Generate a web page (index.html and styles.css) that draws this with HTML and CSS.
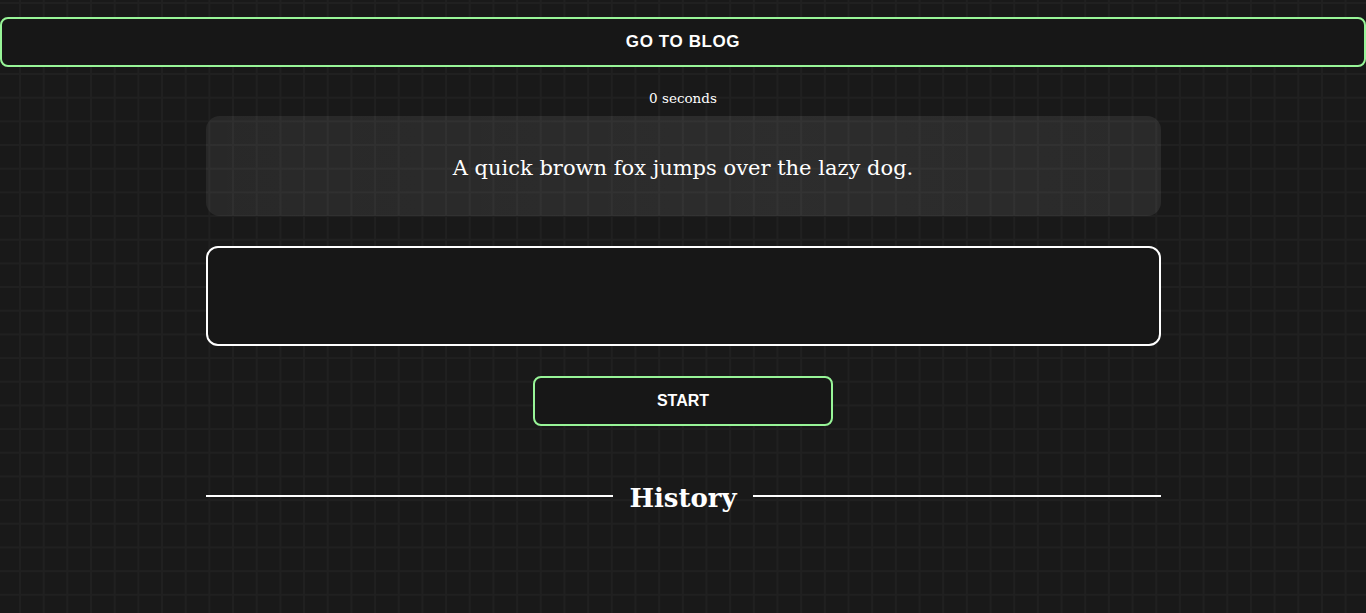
FILE: index.html
```html
<!DOCTYPE html>
<html lang="en">
<head>
<meta charset="utf-8">
<title>Typing Test</title>
<link rel="stylesheet" href="styles.css">
</head>
<body>
<div class="page">
  <a class="btn btn-wide" href="#">GO TO BLOG</a>
  <main class="main">
    <div class="timer">0 seconds</div>
    <div class="prompt">A quick brown fox jumps over the lazy dog.</div>
    <textarea class="input" aria-label="Type here"></textarea>
    <button class="btn btn-start" type="button">START</button>
    <div class="history">
      <span class="rule"></span>
      <h2 class="history-title">History</h2>
      <span class="rule"></span>
    </div>
  </main>
</div>
</body>
</html>
```
FILE: styles.css
```css
html, body {
  margin: 0;
  padding: 0;
  height: 100%;
}
body {
  background-color: #191919;
  background-image:
    linear-gradient(to right, #202020 2px, transparent 2px),
    linear-gradient(to bottom, #202020 2px, transparent 2px);
  background-size: 23.68px 23.68px;
  background-position: 19px 2px;
  color: #fff;
  font-family: "DejaVu Serif", serif;
  overflow: hidden;
}
.page {
  padding-top: 17px;
  display: flex;
  flex-direction: column;
}
.btn {
  box-sizing: border-box;
  display: flex;
  align-items: center;
  justify-content: center;
  height: 50px;
  background: #171717;
  border: 2px solid #98f598;
  border-radius: 8px;
  color: #fff;
  font-family: "Liberation Sans", Arial, sans-serif;
  font-weight: 700;
  font-size: 16px;
  text-decoration: none;
  cursor: pointer;
}
.btn-wide {
  width: 100%;
  font-size: 17px;
  letter-spacing: 0.6px;
}
.main {
  width: 955px;
  margin: 0 auto;
  display: flex;
  flex-direction: column;
  align-items: center;
}
.timer {
  margin-top: 23px;
  height: 16px;
  line-height: 16px;
  font-size: 13.5px;
}
.prompt {
  box-sizing: border-box;
  margin-top: 10px;
  width: 100%;
  height: 100px;
  border-radius: 14px;
  background: linear-gradient(to right, rgba(255,255,255,0.065), rgba(255,255,255,0.085) 60%, rgba(255,255,255,0.075));
  display: flex;
  align-items: center;
  justify-content: center;
  font-size: 21px;
  padding-top: 3px;
}
.input {
  box-sizing: border-box;
  margin-top: 30px;
  width: 100%;
  height: 100px;
  background: #171717;
  border: 2px solid #fff;
  border-radius: 12px;
  resize: none;
  outline: none;
  color: #fff;
  font-family: "DejaVu Serif", serif;
  font-size: 20px;
  padding: 12px;
  display: block;
}
.btn-start {
  margin-top: 30px;
  width: 300px;
}
.history {
  margin-top: 54px;
  width: 100%;
  display: flex;
  align-items: center;
  gap: 16px;
}
.rule {
  flex: 1;
  height: 2px;
  background: #fff;
  margin-top: -5px;
}
.history-title {
  margin: 0;
  font-size: 26px;
  font-weight: 700;
  line-height: 36px;
}
```
